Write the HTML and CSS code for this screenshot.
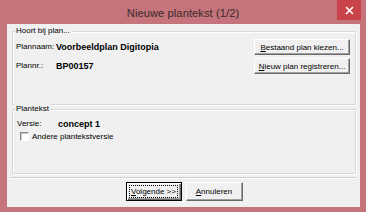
FILE: index.html
```html
<!DOCTYPE html>
<html lang="nl">
<head>
    <meta charset="UTF-8">
    <title>Nieuwe plantekst (1/2)</title>
    <link rel="stylesheet" href="styles.css">
</head>
<body>
    <div class="window">
        <div class="titlebar">
            <span class="title">Nieuwe plantekst (1/2)</span>
            <div class="close">
                <svg width="9" height="9" viewBox="0 0 9 9"><path d="M1 1 L8 8 M8 1 L1 8" stroke="#fff" stroke-width="1.6"/></svg>
            </div>
        </div>

        <div class="client">
            <!-- Plan -->
            <div class="group group-plan">
                <div class="group-title">Hoort bij plan...</div>
                <div class="plan-grid">
                    <span class="lbl">Plannaam:</span>
                    <span class="val">Voorbeeldplan Digitopia</span>
                    <button class="btn btn-side"><u>B</u>estaand plan kiezen...</button>
                    <span class="lbl">Plannr.:</span>
                    <span class="val">BP00157</span>
                    <button class="btn btn-side"><u>N</u>ieuw plan registreren...</button>
                </div>
            </div>

            <!-- Plantekst -->
            <div class="group group-tekst">
                <div class="group-title">Plantekst</div>
                <div class="row">
                    <span class="lbl lbl-versie">Versie:</span>
                    <span class="val">concept 1</span>
                </div>
                <label class="check"><span class="box"></span>Andere plantekstversie</label>
            </div>

            <div class="separator"></div>

            <div class="actions">
                <button class="btn btn-default"><span class="focus"><u>V</u>olgende &gt;&gt;</span></button>
                <button class="btn"><u>A</u>nnuleren</button>
            </div>
        </div>
    </div>
</body>
</html>
```

FILE: styles.css
```css
* { margin: 0; padding: 0; box-sizing: border-box; }
body { width: 366px; height: 212px; overflow: hidden; font-family: "Liberation Sans", Arial, sans-serif; font-size: 8px; color: #000; }

.window { width: 366px; height: 212px; background: #c4747a; position: relative; display: flex; flex-direction: column; }
.titlebar { height: 24px; display: flex; align-items: center; justify-content: center; }
.title { font-size: 11.2px; color: #3a2a2c; letter-spacing: 0.05px; padding-top: 2px; }
.close { position: absolute; top: 0; right: 5px; width: 24px; height: 20px; background: #c9434a; display: flex; align-items: center; justify-content: center; }

.client { margin: 0 6px 0 7px; height: 183px; background: #f0f0f0; padding-top: 7px; }

.group { border: 1px solid #d8d8d8; box-shadow: inset 1px 1px #fff, 1px 1px #fff; margin: 0 4px 0 5px; }
.group-title { display: table; margin: -6px 0 0 2px; padding: 0 1px; background: #f0f0f0; line-height: 10px; }
.group-plan { height: 74px; }
.group-tekst { height: 65px; margin-top: 4px; }

.lbl { line-height: 16px; }
.val { font-weight: bold; font-size: 9px; line-height: 16px; }

.plan-grid { display: grid; grid-template-columns: 40px 1fr 96px; grid-auto-rows: 16px; row-gap: 3px; padding: 3px 5px 0 3px; }

.row { display: flex; padding-left: 4px; margin-top: 4px; height: 12px; align-items: center; }
.row .lbl, .row .val { line-height: 12px; }
.lbl-versie { width: 41px; }
.check { display: flex; align-items: center; gap: 3px; margin: 1px 0 0 7px; height: 11px; }
.box { width: 9px; height: 9px; background: #fff; border: 1px solid; border-color: #8a8a8a #fff #fff #8a8a8a; box-shadow: inset 1px 1px #c8c8c8; }

.separator { margin: 3px 4px 0 3px; height: 2px; border-top: 1px solid #d0d0d0; border-bottom: 1px solid #fff; }

.actions { display: flex; justify-content: center; gap: 4px; margin-top: 3px; padding-left: 1px; }

.btn { font-family: inherit; font-size: 8px; color: #000; background: #f0f0f0; height: 16px; border: 1px solid; border-color: #fff #696969 #696969 #fff; box-shadow: inset -1px -1px #a0a0a0; display: flex; align-items: center; justify-content: center; }
.btn-side { width: 96px; }
.actions .btn { width: 57px; height: 19px; }
.actions .btn-default { width: 56px; border-color: #000; box-shadow: inset 1px 1px #fff, inset -1px -1px #696969, inset -2px -2px #a0a0a0; }
.focus { outline: 1px dotted #000; padding: 0 1px; line-height: 11px; }
```
